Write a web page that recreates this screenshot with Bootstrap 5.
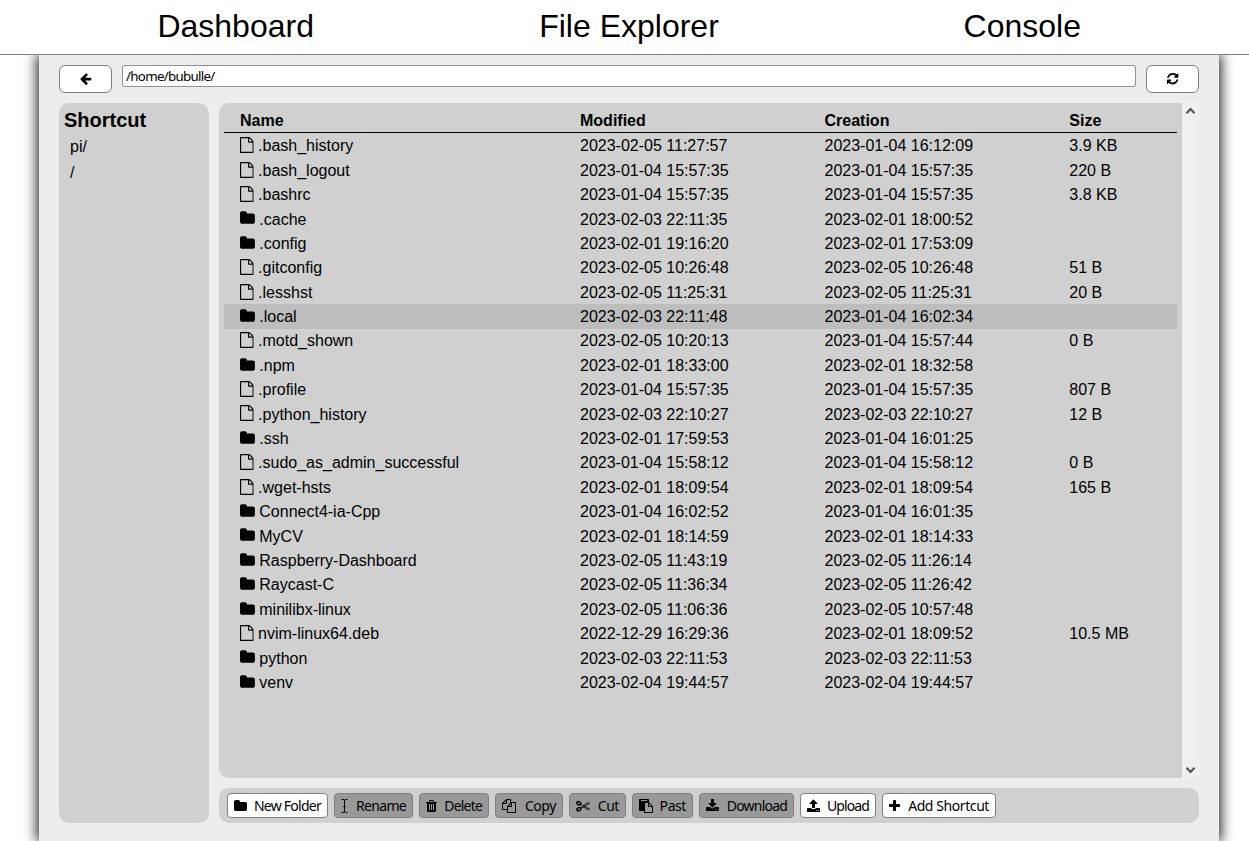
<!DOCTYPE html>
<html lang="en">
<head>
<meta charset="utf-8">
<title>File Explorer</title>
<link href="https://cdn.jsdelivr.net/npm/bootstrap@5.3.0/dist/css/bootstrap.min.css" rel="stylesheet">
<style>
html,body{height:100%}
body{font-family:"Liberation Sans",Arial,sans-serif;font-size:16px;line-height:1.2;color:#000;background:#fff;overflow:hidden}
.topnav{height:55px;border-bottom:1px solid #808080;background:#fff;position:relative;z-index:2;flex:none}
.topnav .inner,.shell{width:1180px;margin-left:39px}
.topnav .inner{height:52px}
.topnav a{color:#000;font-size:32px;text-decoration:none;flex:1 0 0;text-align:center}
.shell{background:#ededed;box-shadow:0 0 13px 1px #000;padding:10px 20px 18px;min-height:0}
.pathbar{height:38px;gap:10px;flex:none}
.sqbtn{width:53px;height:28px;border:1px solid #808080;border-radius:6px;background:#fff;padding:0}
.path{height:22px;border:1px solid #8f8f9d;border-radius:2px;background:#fff;padding:0 3px;font:13.33px/20px "Noto Sans",sans-serif;letter-spacing:-.7px;min-width:0;color:#000}
svg{fill:#000;display:block;flex:none}
.pane{background:#d0d0d0;border-radius:10px}
.side{width:150px;padding:5px 5px}
.side h2{font-size:20px;font-weight:700;margin:0;line-height:24px}
.side a{display:block;color:#000;text-decoration:none;padding-left:6px;line-height:26px}
.side h2+a{margin-top:2px}
.listing{height:675px;flex:none}
.files{border-radius:10px 0 0 10px;padding:5px 5px 0;min-width:0}
.line{display:grid;grid-template-columns:340px 244.5px 244.8px 1fr;height:24.4px;padding:.7px 0 0 16px;align-items:center;white-space:nowrap}
.line.head{font-weight:700;height:25px;padding-top:2px;border-bottom:1px solid #000;margin-bottom:.4px}
.line.picked{background:#bdbdbd}
.line .fname{display:flex;align-items:center;gap:4.4px}
.fname svg{margin-top:-1.5px}
.rail{width:17px;background:#f0f0f0;padding:4px 0}
.rail svg{fill:none;stroke:#505050;stroke-width:2}
.tools{height:35px;gap:6px;padding:0 8px;flex:none}
.tool{height:25px;border:1px solid #808080;border-radius:4px;background:#fff;padding:0 6px;font:14px/23px "Noto Sans",sans-serif;letter-spacing:-.42px;color:#000;display:flex;align-items:center;justify-content:space-between;white-space:nowrap}
.tool:disabled{background:#999}
.w1{width:101px;letter-spacing:-.75px}.w2{width:79px;letter-spacing:-.7px}.w3{width:70px;letter-spacing:-.8px}.w4{width:68px}.w5{width:57px}.w6{width:61px}.w7{width:95px;letter-spacing:-.8px}.w8{width:76px;letter-spacing:-.9px}.w9{width:114px}
</style>
</head>
<body class="d-flex flex-column align-items-start">
<svg width="0" height="0" class="position-absolute">
<symbol id="file" viewBox="128 0 1536 1792"><path d="M1596 380q28 28 48 76t20 88v1152q0 40-28 68t-68 28h-1344q-40 0-68-28t-28-68v-1600q0-40 28-68t68-28h896q40 0 88 20t76 48zm-444-244v376h376q-10-29-22-41l-313-313q-12-12-41-22zm384 1528v-1024h-416q-40 0-68-28t-28-68v-416h-768v1536h1280z"/></symbol>
<symbol id="folder" viewBox="64 0 1664 1792"><path d="M1728 608v704q0 92-66 158t-158 66h-1216q-92 0-158-66t-66-158v-960q0-92 66-158t158-66h320q92 0 158 66t66 158v32h672q92 0 158 66t66 158z"/></symbol>
</svg>
<nav class="topnav w-100 d-flex"><div class="inner d-flex align-items-center">
<a href="#">Dashboard</a><a href="#">File Explorer</a><a href="#">Console</a></div></nav>
<main class="shell flex-grow-1 d-flex flex-column">
<div class="pathbar d-flex align-items-start">
<button class="sqbtn d-flex align-items-center justify-content-center" aria-label="Back"><svg width="13.33" height="13.33" viewBox="0 0 1792 1792"><path d="M1664 896v128q0 53-32.5 90.5t-84.5 37.5h-704l293 294q38 36 38 90t-38 90l-75 76q-37 37-90 37-52 0-91-37l-651-652q-37-37-37-90 0-52 37-91l651-650q38-38 91-38 52 0 90 38l75 74q38 38 38 91t-38 91l-293 293h704q52 0 84.5 37.5t32.5 90.5z"/></svg></button>
<input class="path flex-grow-1" value="/home/bubulle/" aria-label="Path">
<button class="sqbtn d-flex align-items-center justify-content-center" aria-label="Refresh"><svg width="13.33" height="13.33" viewBox="0 0 1792 1792"><path d="M1639 1056q0 5-1 7-64 268-268 434.5t-478 166.5q-146 0-282.5-55t-243.5-157l-129 129q-19 19-45 19t-45-19-19-45v-448q0-26 19-45t45-19h448q26 0 45 19t19 45-19 45l-137 137q71 66 161 102t187 36q134 0 250-65t186-179q11-17 53-117 8-23 30-23h192q13 0 22.5 9.5t9.5 22.5zm25-800v448q0 26-19 45t-45 19h-448q-26 0-45-19t-19-45 19-45l138-138q-148-137-349-137-134 0-250 65t-186 179q-11 17-53 117-8 23-30 23h-199q-13 0-22.5-9.5t-9.5-22.5v-7q65-268 270-434.5t480-166.5q146 0 284 55.5t245 156.5l130-129q19-19 45-19t45 19 19 45z"/></svg></button>
</div>
<div class="d-flex flex-grow-1" style="gap:10px">
<aside class="pane side"><h2>Shortcut</h2><a href="#">pi/</a><a href="#">/</a></aside>
<section class="d-flex flex-column flex-grow-1" style="gap:10px">
<div class="listing d-flex">
<div class="pane files flex-grow-1" id="files"><div class="line head"><span>Name</span><span>Modified</span><span>Creation</span><span>Size</span></div></div>
<div class="rail d-flex flex-column justify-content-between align-items-center"><svg width="11" height="8" viewBox="0 0 11 8"><path d="M1.5 6.2 5.5 2l4 4.2"/></svg><svg width="11" height="8" viewBox="0 0 11 8"><path d="M1.5 1.8 5.5 6l4-4.2"/></svg></div>
</div>
<div class="pane tools d-flex align-items-center">
<button class="tool w1"><svg width="13" height="14"><use href="#folder"/></svg>New Folder</button>
<button class="tool w2" disabled><svg width="8" height="14" viewBox="0 0 8 14"><path d="M.5.5H2.5Q3.5.5 3.5 2V12Q3.5 13.5 2.5 13.5H.5M6.5.5H4.5Q3.5.5 3.5 2V12Q3.5 13.5 4.5 13.5H6.5M2 7.5h3" fill="none" stroke="#000"/></svg>Rename</button>
<button class="tool w3" disabled><svg width="11" height="14" viewBox="192 0 1408 1792"><path d="M704 1376v-704q0-14-9-23t-23-9h-64q-14 0-23 9t-9 23v704q0 14 9 23t23 9h64q14 0 23-9t9-23zm256 0v-704q0-14-9-23t-23-9h-64q-14 0-23 9t-9 23v704q0 14 9 23t23 9h64q14 0 23-9t9-23zm256 0v-704q0-14-9-23t-23-9h-64q-14 0-23 9t-9 23v704q0 14 9 23t23 9h64q14 0 23-9t9-23zm-544-992h448l-48-117q-7-9-17-11h-317q-10 2-17 11zm928 32v64q0 14-9 23t-23 9h-96v948q0 83-47 143.5t-113 60.5h-832q-66 0-113-58.5t-47-141.5v-952h-96q-14 0-23-9t-9-23v-64q0-14 9-23t23-9h309l70-167q15-37 54-63t79-26h320q40 0 79 26t54 63l70 167h309q14 0 23 9t9 23z"/></svg>Delete</button>
<button class="tool w4" disabled><svg width="14" height="14" viewBox="0 0 1792 1792"><path d="M1696 384q40 0 68 28t28 68v1216q0 40-28 68t-68 28h-960q-40 0-68-28t-28-68v-288h-544q-40 0-68-28t-28-68v-672q0-40 20-88t48-76l408-408q28-28 76-48t88-20h416q40 0 68 28t28 68v328q68-40 128-40h416zm-544 213l-299 299h299v-299zm-640-384l-299 299h299v-299zm196 647l316-316v-416h-384v416q0 40-28 68t-68 28h-416v640h512v-256q0-40 20-88t48-76zm956 804v-1152h-384v416q0 40-28 68t-68 28h-416v640h896z"/></svg>Copy</button>
<button class="tool w5" disabled><svg width="14" height="14" viewBox="0 0 14 14"><g fill="none" stroke="#000"><ellipse cx="2.8" cy="4.2" rx="2" ry="1.5" stroke-width="1.5" transform="rotate(25 2.8 4.2)"/><ellipse cx="2.8" cy="10.2" rx="2" ry="1.5" stroke-width="1.5" transform="rotate(-25 2.8 10.2)"/><path d="M4.6 5.3 7 6.7l5.2-3.1 1.3.7L7.4 8 4.6 9.3M4.6 9 7 7.7l5.2 3.1 1.3-.7L7.4 6.6" stroke-width=".8"/></g></svg>Cut</button>
<button class="tool w6" disabled><svg width="14" height="14" viewBox="0 0 1792 1792"><path d="M768 1664h896v-640h-416q-40 0-68-28t-28-68v-416h-384v1152zm256-1440v-64q0-13-9.5-22.5t-22.5-9.5h-704q-13 0-22.5 9.5t-9.5 22.5v64q0 13 9.5 22.5t22.5 9.5h704q13 0 22.5-9.5t9.5-22.5zm256 672h299l-299-299v299zm512 128v672q0 40-28 68t-68 28h-960q-40 0-68-28t-28-68v-160h-544q-40 0-68-28t-28-68v-1344q0-40 28-68t68-28h1088q40 0 68 28t28 68v328q21 13 36 28l408 408q28 28 48 76t20 88z"/></svg>Past</button>
<button class="tool w7" disabled><svg width="13" height="14" viewBox="64 0 1664 1792"><path d="M1344 1344q0-26-19-45t-45-19-45 19-19 45 19 45 45 19 45-19 19-45zm256 0q0-26-19-45t-45-19-45 19-19 45 19 45 45 19 45-19 19-45zm128-224v320q0 40-28 68t-68 28h-1472q-40 0-68-28t-28-68v-320q0-40 28-68t68-28h465l135 136q58 56 136 56t136-56l136-136h464q40 0 68 28t28 68zm-325-569q17 41-14 70l-448 448q-18 19-45 19t-45-19l-448-448q-31-29-14-70 17-39 59-39h256v-448q0-26 19-45t45-19h256q26 0 45 19t19 45v448h256q42 0 59 39z"/></svg>Download</button>
<button class="tool w8"><svg width="13" height="14" viewBox="64 0 1664 1792"><path d="M1344 1472q0-26-19-45t-45-19-45 19-19 45 19 45 45 19 45-19 19-45zm256 0q0-26-19-45t-45-19-45 19-19 45 19 45 45 19 45-19 19-45zm128-224v320q0 40-28 68t-68 28h-1472q-40 0-68-28t-28-68v-320q0-40 28-68t68-28h427q21 56 70.5 92t110.5 36h256q61 0 110.5-36t70.5-92h427q40 0 68 28t28 68zm-325-648q-17 40-59 40h-256v448q0 26-19 45t-45 19h-256q-26 0-45-19t-19-45v-448h-256q-42 0-59-40-17-39 14-69l448-448q18-19 45-19t45 19l448 448q31 30 14 69z"/></svg>Upload</button>
<button class="tool w9"><svg width="11" height="14" viewBox="192 0 1408 1792"><path d="M1600 736v192q0 40-28 68t-68 28h-416v416q0 40-28 68t-68 28h-192q-40 0-68-28t-28-68v-416h-416q-40 0-68-28t-28-68v-192q0-40 28-68t68-28h416v-416q0-40 28-68t68-28h192q40 0 68 28t28 68v416h416q40 0 68 28t28 68z"/></svg>Add Shortcut</button>
</div>
</section>
</div>
</main>
<script src="https://cdn.jsdelivr.net/npm/bootstrap@5.3.0/dist/js/bootstrap.bundle.min.js"></script>
<script>
// name | modified | creation | size (folders have no size)
const rows=`.bash_history|2023-02-05 11:27:57|2023-01-04 16:12:09|3.9 KB
.bash_logout|2023-01-04 15:57:35|2023-01-04 15:57:35|220 B
.bashrc|2023-01-04 15:57:35|2023-01-04 15:57:35|3.8 KB
.cache|2023-02-03 22:11:35|2023-02-01 18:00:52|
.config|2023-02-01 19:16:20|2023-02-01 17:53:09|
.gitconfig|2023-02-05 10:26:48|2023-02-05 10:26:48|51 B
.lesshst|2023-02-05 11:25:31|2023-02-05 11:25:31|20 B
.local|2023-02-03 22:11:48|2023-01-04 16:02:34|
.motd_shown|2023-02-05 10:20:13|2023-01-04 15:57:44|0 B
.npm|2023-02-01 18:33:00|2023-02-01 18:32:58|
.profile|2023-01-04 15:57:35|2023-01-04 15:57:35|807 B
.python_history|2023-02-03 22:10:27|2023-02-03 22:10:27|12 B
.ssh|2023-02-01 17:59:53|2023-01-04 16:01:25|
.sudo_as_admin_successful|2023-01-04 15:58:12|2023-01-04 15:58:12|0 B
.wget-hsts|2023-02-01 18:09:54|2023-02-01 18:09:54|165 B
Connect4-ia-Cpp|2023-01-04 16:02:52|2023-01-04 16:01:35|
MyCV|2023-02-01 18:14:59|2023-02-01 18:14:33|
Raspberry-Dashboard|2023-02-05 11:43:19|2023-02-05 11:26:14|
Raycast-C|2023-02-05 11:36:34|2023-02-05 11:26:42|
minilibx-linux|2023-02-05 11:06:36|2023-02-05 10:57:48|
nvim-linux64.deb|2022-12-29 16:29:36|2023-02-01 18:09:52|10.5 MB
python|2023-02-03 22:11:53|2023-02-03 22:11:53|
venv|2023-02-04 19:44:57|2023-02-04 19:44:57|`.split('\n').map(r=>r.split('|'));
document.getElementById('files').insertAdjacentHTML('beforeend',rows.map(([n,m,c,s])=>
`<div class="line${n==='.local'?' picked':''}"><span class="fname"><svg width="${s?13.7:14.9}" height="16"><use href="#${s?'file':'folder'}"/></svg>${n}</span><span>${m}</span><span>${c}</span><span>${s}</span></div>`).join(''));
</script>
</body>
</html>
